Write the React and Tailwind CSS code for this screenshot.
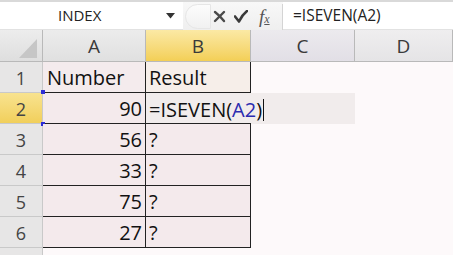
import React from "react";

const font = { fontFamily: '"Open Sans", "Noto Sans", sans-serif' };

function ColHeader({ label, className }) {
  return (
    <div className={`flex items-center justify-center border-r border-b border-[#b9b9b9] pt-[1px] text-[19px] text-[#3a3a3a] ${className}`}>
      {label}
    </div>
  );
}

function RowHeader({ n, active }) {
  return (
    <div
      className={`flex items-center justify-center border-b border-r border-[#c9c9c9] pt-[2px] text-[18px] text-[#444] ${
        active ? "bg-gradient-to-b from-[#f8e38f] to-[#f1cf5a]" : "bg-[#e7e6e6]"
      }`}
    >
      {n}
    </div>
  );
}

export default function App() {
  const rows = [
    { n: 2, a: "90" },
    { n: 3, a: "56" },
    { n: 4, a: "33" },
    { n: 5, a: "75" },
    { n: 6, a: "27" },
  ];
  return (
    <div className="w-[453px] h-[255px] overflow-hidden bg-[#fdf9fa]" style={font}>
      {/* formula bar */}
      <div className="flex h-[30px] border-t-2 border-[#d9d9d9] bg-white">
        <div className="relative flex w-[183px] items-center border-b border-[#e2e2e2] bg-white pl-[58px] text-[15px] text-[#222]">
          <span>INDEX</span>
          <svg className="absolute left-[166px] top-[11px]" width="9" height="6" viewBox="0 0 9 6">
            <path d="M0 0 L9 0 L4.5 5.5 Z" fill="#333" />
          </svg>
        </div>
        <div className="relative flex w-[100px] items-center bg-gradient-to-b from-[#f8f8f8] to-[#efefef]">
          <div className="absolute left-[2px] top-[2px] h-[25px] w-[26px] rounded-l-full border border-[#e6e6e6] bg-gradient-to-b from-[#fcfcfc] to-[#f1f1f1]" />
          <svg className="absolute top-[8px]" style={{ left: 30 }} width="13" height="13" viewBox="0 0 13 13">
            <path d="M2 2 Q6 5 11 11 M11 2 Q7 6 2 11" stroke="#4a4a4a" strokeWidth="2.4" strokeLinecap="round" fill="none" />
          </svg>
          <svg className="absolute top-[8px]" style={{ left: 51 }} width="14" height="13" viewBox="0 0 14 13">
            <path d="M1 6.5 L5 11.5 Q8 5 13 1" stroke="#3a3a3a" strokeWidth="2.6" fill="none" strokeLinejoin="round" strokeLinecap="round" />
          </svg>
          <span
            className="absolute top-[1px] text-[19px] italic text-[#555]"
            style={{ left: 76, fontFamily: '"Liberation Serif", serif' }}
          >
            f<span className="text-[12px] underline">x</span>
          </span>
          <div className="absolute right-0 top-[2px] h-[26px] w-px bg-[#d4d4d4]" />
        </div>
        <div className="flex flex-1 items-center border-b border-[#e2e2e2] pl-[10px] text-[15.5px] text-[#222]">
          =ISEVEN(A2)
        </div>
      </div>

      {/* grid */}
      <div className="grid grid-cols-[43px_103px_105px_104px_98px] grid-rows-[32px_31px_31px_31px_31px_31px_31px_31px]">
        {/* header row */}
        <div className="relative border-r border-b border-[#b9b9b9] bg-gradient-to-b from-[#ededed] to-[#dedede]">
          <svg className="absolute right-[5px] bottom-[3px]" width="18" height="19" viewBox="0 0 18 19">
            <path d="M18 0 L18 19 L0 19 Z" fill="#c6c6c6" />
          </svg>
        </div>
        <ColHeader label="A" className="bg-gradient-to-b from-[#ececec] to-[#e0e0e0]" />
        <ColHeader label="B" className="bg-gradient-to-b from-[#fbe9a4] to-[#f3cf55]" />
        <ColHeader label="C" className="bg-gradient-to-b from-[#eceaee] to-[#e2dfe6]" />
        <ColHeader label="D" className="bg-gradient-to-b from-[#efeeef] to-[#e5e4e6]" />

        {/* row 1 */}
        <RowHeader n={1} />
        <div className="flex items-center border-r border-b border-[#222] bg-[#f4ebed] pl-[4px] pt-[2px] text-[20px] text-[#111]">
          Number
        </div>
        <div className="flex items-center border-r border-b border-[#222] bg-[#f6eee9] pl-[3px] pt-[2px] text-[20px] text-[#111]">
          Result
        </div>
        <div className="bg-[#fdf9fa]" />
        <div className="bg-[#fdf9fa]" />

        {rows.map((r) => (
          <React.Fragment key={r.n}>
            <RowHeader n={r.n} active={r.n === 2} />
            <div className="relative flex items-center justify-end border-r border-b border-[#222] bg-[#f4eaec] pr-[3px] pt-[2px] text-[20px] text-[#111]">
              {r.a}
              {r.n === 2 && (
                <>
                  <div className="absolute left-[-2px] top-[-3px] h-[4px] w-[4px] bg-[#2d2dd6]" />
                  <div className="absolute left-[-2px] bottom-[-3px] h-[4px] w-[4px] bg-[#2d2dd6]" />
                </>
              )}
            </div>
            {r.n === 2 ? (
              <div className="relative z-10 col-span-2 flex items-center text-[20px] text-[#111]">
                <div className="flex h-full w-[210px] items-center bg-[#f1ecec] pl-[3px] pt-[2px]">
                  =ISEVEN(<span className="text-[#2b2bb0]">A2</span>)
                  <span className="ml-[1px] inline-block h-[22px] w-px bg-[#111]" />
                </div>
                <div className="absolute left-0 bottom-0 h-px w-[105px] bg-[#222]" />
              </div>
            ) : (
              <>
                <div className="flex items-center border-r border-b border-[#222] bg-[#f4eaec] pl-[3px] pt-[2px] text-[20px] text-[#111]">
                  ?
                </div>
                <div className="bg-[#fdf9fa]" />
              </>
            )}
            <div className="bg-[#fdf9fa]" />
          </React.Fragment>
        ))}

        {/* row 7 */}
        <div className="border-r border-[#c9c9c9] bg-[#e7e6e6]" />
        <div className="bg-[#fdf9fa]" />
        <div className="bg-[#fdf9fa]" />
        <div className="bg-[#fdf9fa]" />
        <div className="bg-[#fdf9fa]" />
      </div>
    </div>
  );
}
